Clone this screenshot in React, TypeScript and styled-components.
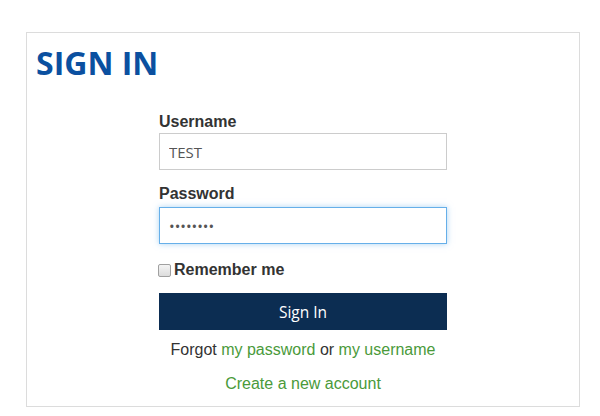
import React from "react";
import styled, { createGlobalStyle } from "styled-components";

const Global = createGlobalStyle`
  html, body { margin: 0; padding: 0; background: #fff; }
  body { font-family: "Liberation Sans", Arial, sans-serif; }
  * { box-sizing: border-box; }
`;

const Page = styled.div`
  padding: 32px 0 0 26px;
`;

const Panel = styled.section`
  width: 554px;
  height: 375px;
  border: 1px solid #dcdcdc;
  padding: 12px 0 0 9px;
`;

const Title = styled.h1`
  margin: 0;
  font-family: "Open Sans", sans-serif;
  font-weight: 700;
  font-size: 32px;
  line-height: 36px;
  color: #0b50a0;
`;

const Form = styled.form`
  width: 288px;
  margin: 31px 0 0 123px;
  display: flex;
  flex-direction: column;
`;

const Label = styled.label`
  display: block;
  font-size: 16px;
  line-height: 20px;
  font-weight: 700;
  color: #333;
  margin-bottom: 1px;
`;

const Input = styled.input<{ $focused?: boolean }>`
  width: 288px;
  height: 37px;
  margin: ${(p) => (p.$focused ? "2px" : "0")} 0 14px;
  padding: 0 9px;
  border: 1px solid ${(p) => (p.$focused ? "#66afe9" : "#cccccc")};
  box-shadow: ${(p) =>
    p.$focused ? "0 0 6px rgba(102, 175, 233, 0.55)" : "none"};
  font-family: "Open Sans", sans-serif;
  font-size: 15px;
  color: #555;
  outline: none;
  background: #fff;
`;

const CheckRow = styled.label`
  display: flex;
  align-items: center;
  margin-top: 2px;
  font-size: 16px;
  line-height: 20px;
  font-weight: 700;
  color: #333;
`;

const Check = styled.input`
  appearance: none;
  width: 13px;
  height: 13px;
  margin: 0 3px 0 -1px;
  border: 1px solid #a0a0a0;
  border-radius: 2px;
  background: linear-gradient(#f4f4f4, #dcdcdc);
`;

const Button = styled.button`
  margin-top: 13px;
  width: 288px;
  height: 37px;
  border: none;
  background: #0c2d52;
  color: #fff;
  font-family: "Open Sans", sans-serif;
  font-size: 15.5px;
  cursor: pointer;
`;

const Line = styled.p<{ $gap: number }>`
  margin: ${(p) => p.$gap}px 0 0;
  text-align: center;
  font-size: 16px;
  line-height: 20px;
  color: #333;
`;

const Link = styled.a`
  color: #4a9a3a;
  text-decoration: none;
`;

export default function App() {
  return (
    <>
      <Global />
      <Page>
        <Panel>
          <Title>SIGN IN</Title>
          <Form onSubmit={(e) => e.preventDefault()}>
            <Label htmlFor="u">Username</Label>
            <Input id="u" defaultValue="TEST" />
            <Label htmlFor="p">Password</Label>
            <Input id="p" type="password" defaultValue="password" $focused />
            <CheckRow>
              <Check type="checkbox" />
              Remember me
            </CheckRow>
            <Button type="submit">Sign In</Button>
            <Line $gap={10}>
              Forgot <Link href="#">my password</Link> or{" "}
              <Link href="#">my username</Link>
            </Line>
            <Line $gap={14}>
              <Link href="#">Create a new account</Link>
            </Line>
          </Form>
        </Panel>
      </Page>
    </>
  );
}
